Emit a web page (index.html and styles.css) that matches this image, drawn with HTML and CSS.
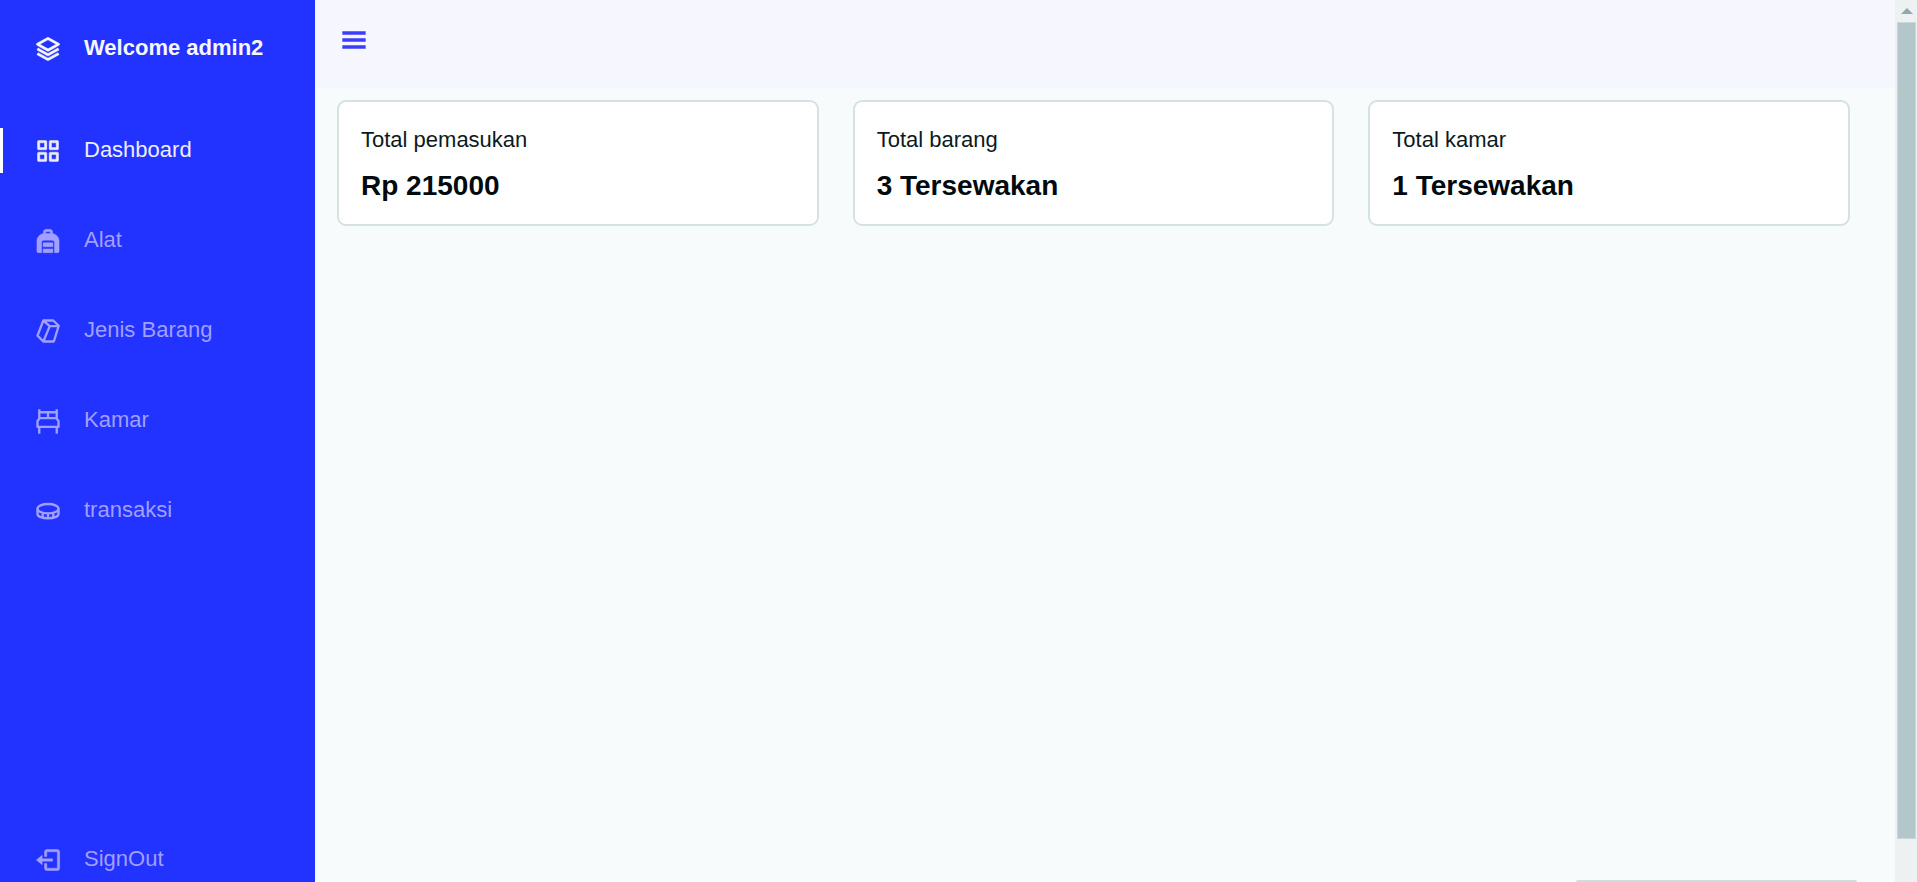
FILE: index.html
```html
<!DOCTYPE html>
<html lang="id">
<head>
<meta charset="utf-8">
<title>Dashboard</title>
<link rel="stylesheet" href="styles.css">
</head>
<body>
<div class="app">
  <nav class="sidebar">
    <div class="sidebar-top">
      <a class="brand" href="#">
        <svg class="icon" viewBox="0 0 24 24"><path d="m21.484 7.125-9.022-5a1 1 0 0 0-.968 0l-8.978 4.96a1 1 0 0 0-.003 1.748l9.022 5.04a1 1 0 0 0 .973.001l8.978-5a1 1 0 0 0-.002-1.749zm-9.461 4.73-6.964-3.89 6.917-3.822 6.964 3.859-6.917 3.853z"/><path d="m12 15.856-8.515-4.730-.971 1.748 9 5a1 1 0 0 0 .971 0l9-5-.971-1.748L12 15.856z"/><path d="m12 19.856-8.515-4.730-.971 1.748 9 5a1 1 0 0 0 .971 0l9-5-.971-1.748L12 19.856z"/></svg>
        <span>Welcome admin2</span>
      </a>
      <a class="nav-link active" href="#">
        <svg class="icon" viewBox="0 0 24 24"><path d="M10 3H4a1 1 0 0 0-1 1v6a1 1 0 0 0 1 1h6a1 1 0 0 0 1-1V4a1 1 0 0 0-1-1zM9 9H5V5h4v4zm11-6h-6a1 1 0 0 0-1 1v6a1 1 0 0 0 1 1h6a1 1 0 0 0 1-1V4a1 1 0 0 0-1-1zm-1 6h-4V5h4v4zm-9 4H4a1 1 0 0 0-1 1v6a1 1 0 0 0 1 1h6a1 1 0 0 0 1-1v-6a1 1 0 0 0-1-1zm-1 6H5v-4h4v4zm11-6h-6a1 1 0 0 0-1 1v6a1 1 0 0 0 1 1h6a1 1 0 0 0 1-1v-6a1 1 0 0 0-1-1zm-1 6h-4v-4h4v4z"/></svg>
        <span>Dashboard</span>
      </a>
      <a class="nav-link" href="#">
        <svg class="icon" viewBox="0 0 24 24"><path fill-rule="evenodd" d="M16 5.500V4.500C16 3 15 2 13.500 2h-3C9 2 8 3 8 4.500v1C5 6.300 2.500 8.500 2.500 12v9a1 1 0 0 0 1 1h3v-8.500C6.500 12 7.200 11.300 8.500 11.300h7c1.300 0 2 .7 2 2.200V22h3a1 1 0 0 0 1-1v-9c0-3.500-2.500-5.700-5.500-6.500zM10 4h4v1.600h-4z"/><path d="M7.800 13.500h8.400V17H7.800zM7.800 18.800h8.400V22H7.800z"/></svg>
        <span>Alat</span>
      </a>
      <a class="nav-link" href="#">
        <svg class="icon line" viewBox="0 0 24 24"><path d="M8 3h8.500l4.700 4.500L17 21H8l-5-5zM8 3l5.500 4.800h7.700M13.500 7.800 8 21"/></svg>
        <span>Jenis Barang</span>
      </a>
      <a class="nav-link" href="#">
        <svg class="icon line" viewBox="0 0 24 24"><path d="M4.500 2v8M19.500 2v8M4.500 4.500h15M12 4.500V9M4.500 17v6M19.500 17v6M5 9.500h14l2 2.500v5H3v-5z"/></svg>
        <span>Kamar</span>
      </a>
      <a class="nav-link" href="#">
        <svg class="icon line" viewBox="0 0 24 24"><ellipse cx="12" cy="10" rx="9" ry="4"/><path d="M3 10v4.500c0 2.200 4 3.800 9 3.800s9-1.600 9-3.800V10M7.500 13.500v4M12 14v4M16.500 13.500v4"/></svg>
        <span>transaksi</span>
      </a>
    </div>
    <a class="nav-link" href="#">
      <svg class="icon" viewBox="0 0 24 24"><path d="m2 12 5 4v-3h9v-2H7V8z"/><path d="M20 3h-9c-1.103 0-2 .897-2 2v4h2V5h9v14h-9v-4H9v4c0 1.103.897 2 2 2h9c1.103 0 2-.897 2-2V5c0-1.103-.897-2-2-2z"/></svg>
      <span>SignOut</span>
    </a>
  </nav>
  <div class="page">
    <header class="header">
      <button class="menu-button" type="button" aria-label="Menu">
        <svg class="icon" viewBox="0 0 24 24"><path d="M2 4.500h20v3H2zM2 10.500h20v3H2zM2 16.500h20v3H2z"/></svg>
      </button>
    </header>
    <main class="cards">
      <section class="card"><p class="card-label">Total pemasukan</p><h2 class="card-value">Rp 215000</h2></section>
      <section class="card"><p class="card-label">Total barang</p><h2 class="card-value">3 Tersewakan</h2></section>
      <section class="card"><p class="card-label">Total kamar</p><h2 class="card-value">1 Tersewakan</h2></section>
    </main>
    <div class="bottom-panel"></div>
  </div>
  <div class="scrollbar" aria-hidden="true">
    <svg class="scroll-arrow" viewBox="0 0 12 6"><path d="M0 6 6 0l6 6z"/></svg>
    <div class="scroll-thumb"></div>
  </div>
</div>
</body>
</html>
```

FILE: styles.css
```css
* {
  box-sizing: border-box;
}

body {
  margin: 0;
  font-family: "Liberation Sans", Arial, sans-serif;
  font-size: 22px;
  line-height: 32px;
  color: #0b1a20;
  background: #f7fbfc;
}

.app {
  display: grid;
  grid-template-columns: 315px 1fr 22px;
  height: 100vh;
  overflow: hidden;
}

.sidebar {
  display: flex;
  flex-direction: column;
  justify-content: space-between;
  background: #2232ff;
}

.sidebar-top {
  display: flex;
  flex-direction: column;
  gap: 45px;
}

.brand,
.nav-link {
  display: flex;
  align-items: center;
  gap: 22px;
  height: 45px;
  padding: 0 0 2px 31px;
  border-left: 3px solid transparent;
  color: #a19fff;
  text-decoration: none;
}

.brand {
  margin: 26px 0 12px;
  color: #f7f6fb;
  font-weight: bold;
}

.nav-link.active {
  border-left-color: #ffffff;
  color: #eeedff;
}

.icon {
  flex: none;
  width: 28px;
  height: 28px;
  margin-top: 2px;
  fill: currentColor;
  stroke: currentColor;
  stroke-width: 0.4;
}

.icon.line {
  fill: none;
  stroke-width: 2;
  stroke-linejoin: round;
}

.page {
  position: relative;
}

.header {
  display: flex;
  align-items: center;
  height: 88px;
  padding: 0 0 8px 25px;
  background: #f6f6fe;
}

.menu-button {
  display: flex;
  padding: 0;
  border: 0;
  background: none;
  color: #3c3cff;
}

.menu-button .icon {
  margin: 0;
  stroke: none;
}

.cards {
  display: grid;
  grid-template-columns: repeat(3, 1fr);
  gap: 34px;
  padding: 12px 45px 0 22px;
}

.card {
  padding: 22px 22px 16px;
  border: 2px solid #d6e1e2;
  border-radius: 9px;
  background: #ffffff;
}

.card-label {
  margin: 0 0 8px;
}

.card-value {
  margin: 0;
  font-size: 28px;
  line-height: 44px;
  color: #030a0d;
}

.bottom-panel {
  position: absolute;
  right: 38px;
  bottom: 0;
  width: 281px;
  height: 2px;
  border-radius: 4px 4px 0 0;
  background: #d0dcdd;
}

.scrollbar {
  display: flex;
  flex-direction: column;
  align-items: center;
  padding: 8px 1px 43px 2px;
  background: #edf1f2;
}

.scroll-arrow {
  flex: none;
  width: 12px;
  height: 6px;
  margin-bottom: 8px;
  fill: #8fa9ac;
}

.scroll-thumb {
  flex: 1;
  align-self: stretch;
  border: 1px solid #c8d7d9;
  background: #b3c6c9;
}
```
